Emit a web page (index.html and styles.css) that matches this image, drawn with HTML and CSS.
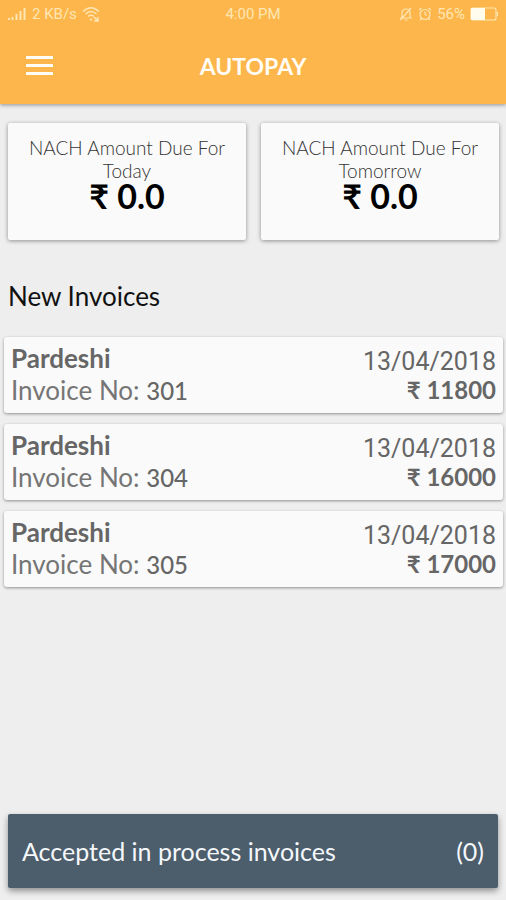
FILE: index.html
```html
<!DOCTYPE html>
<html lang="en">
<head>
<meta charset="utf-8">
<meta name="viewport" content="width=device-width, initial-scale=1">
<title>Autopay</title>
<link rel="stylesheet" href="styles.css">
</head>
<body>
<header class="app-header">
  <div class="status-bar">
    <div class="status-group">
      <svg class="icon-signal" viewBox="0 0 19 14" aria-hidden="true"><path d="M1.5 11v2M5 10v3M9 7v6M13 4v9M17 1v12"/></svg>
      <span>2 KB/s</span>
      <svg class="icon-wifi" viewBox="0 0 18 16" aria-hidden="true"><path d="M1 5.5Q9-2 17 5.5M3.5 8Q9 3 14.500 8M6 10.500Q9 8 12 10.500M8 13l1 1 1-1M12 11l4 4M16 11v4h-4"/></svg>
    </div>
    <span class="clock">4:00 PM</span>
    <div class="status-group status-right">
      <svg class="icon-status" viewBox="0 0 14 14" aria-hidden="true"><path d="M1 11h12M3 11V6q0-4 4-4t4 4v5M5.500 13h3M1.500 13L12 1"/></svg>
      <svg class="icon-status" viewBox="0 0 14 14" aria-hidden="true"><circle cx="7" cy="7.500" r="5"/><path d="M7 4.500v3l2 1M1 3l2.500-2M13 3l-2.500-2M3.500 11.500L2 13M10.500 11.500L12 13"/></svg>
      <span>56%</span>
      <svg class="icon-battery" viewBox="0 0 29 14" aria-hidden="true"><rect x="1" y="1" width="25" height="12" rx="2"/><path class="charge" d="M1 1h14v12H1z"/><path d="M27.500 5v4"/></svg>
    </div>
  </div>
  <div class="toolbar">
    <button class="menu-button" type="button" aria-label="Menu">
      <svg class="icon-menu" viewBox="0 0 28 20" aria-hidden="true"><path d="M0 1.500h27M0 9.500h27M0 17.500h27"/></svg>
    </button>
    <h1 class="title">AUTOPAY</h1>
  </div>
</header>
<main class="content">
  <section class="summary">
    <article class="due-card">
      <p class="due-label">NACH Amount Due For Today</p>
      <p class="due-amount">₹ 0.0</p>
    </article>
    <article class="due-card">
      <p class="due-label">NACH Amount Due For Tomorrow</p>
      <p class="due-amount">₹ 0.0</p>
    </article>
  </section>
  <h2 class="section-title">New Invoices</h2>
  <ul class="invoices">
    <li class="invoice">
      <div class="details"><strong class="name">Pardeshi</strong><span>Invoice No: <b class="number">301</b></span></div>
      <div class="billing"><time class="date" datetime="2018-04-13">13/04/2018</time><strong class="amount">₹ 11800</strong></div>
    </li>
    <li class="invoice">
      <div class="details"><strong class="name">Pardeshi</strong><span>Invoice No: <b class="number">304</b></span></div>
      <div class="billing"><time class="date" datetime="2018-04-13">13/04/2018</time><strong class="amount">₹ 16000</strong></div>
    </li>
    <li class="invoice">
      <div class="details"><strong class="name">Pardeshi</strong><span>Invoice No: <b class="number">305</b></span></div>
      <div class="billing"><time class="date" datetime="2018-04-13">13/04/2018</time><strong class="amount">₹ 17000</strong></div>
    </li>
  </ul>
</main>
<footer class="footer">
  <button class="accepted" type="button"><span>Accepted in process invoices</span><span>(0)</span></button>
</footer>
</body>
</html>
```

FILE: styles.css
```css
* {
  box-sizing: border-box;
}

body {
  margin: 0;
  min-height: 100vh;
  display: flex;
  flex-direction: column;
  background: #eeeeee;
  color: #666;
  font-family: Lato, "Noto Sans", sans-serif;
}

h1, h2, p, ul {
  margin: 0;
  padding: 0;
}

svg {
  display: block;
  fill: none;
  stroke: currentColor;
}

.app-header {
  background: #fdb64b;
  color: #fffdf5;
  box-shadow: 0 1px 4px rgba(0, 0, 0, 0.4);
}

.status-bar {
  display: grid;
  grid-template-columns: 1fr auto 1fr;
  align-items: center;
  height: 27px;
  padding: 0 7px;
  color: #ffe6b3;
  font: 15px/20px Roboto, sans-serif;
}

.status-group {
  display: flex;
  align-items: center;
  gap: 5px;
}

.status-right {
  justify-content: flex-end;
}

.icon-signal {
  width: 20px;
  height: 14px;
  stroke-width: 2;
}

.icon-wifi {
  width: 18px;
  height: 16px;
  stroke-width: 1.5;
}

.icon-status {
  width: 14px;
  height: 14px;
  stroke-width: 1.2;
}

.icon-battery {
  width: 29px;
  height: 14px;
  stroke-width: 1.2;
}

.charge {
  fill: #fffbed;
  stroke: none;
}

.toolbar {
  display: grid;
  grid-template-columns: 1fr auto 1fr;
  align-items: center;
  height: 77px;
  padding: 0 20px;
}

.menu-button {
  justify-self: start;
  margin: 0;
  padding: 6px;
  border: 0;
  background: none;
  color: inherit;
}

.icon-menu {
  width: 28px;
  height: 20px;
  stroke-width: 3;
}

.title {
  font-size: 23px;
  line-height: 32px;
  font-weight: 700;
}

.content {
  flex: 1;
  padding: 19px 3px 19px 4px;
}

.summary {
  display: grid;
  grid-template-columns: 1fr 1fr;
  gap: 15px;
  padding: 0 4px;
}

.due-card {
  min-height: 117px;
  padding: 13px 16px;
  background: #fafafa;
  border-radius: 2px;
  box-shadow: 0 1px 4px rgba(0, 0, 0, 0.4);
  text-align: center;
}

.due-label {
  font-size: 19px;
  line-height: 23px;
  font-weight: 300;
  color: #333;
}

.due-amount {
  color: #000;
  font-size: 34px;
  line-height: 28px;
  font-weight: 700;
}

.section-title {
  padding: 39px 4px 24px;
  color: #111;
  font-size: 26px;
  line-height: 34px;
  font-weight: 400;
}

.invoices {
  display: grid;
  gap: 11px;
  list-style: none;
}

.invoice {
  display: flex;
  justify-content: space-between;
  min-height: 76px;
  padding: 5px 7px;
  background: #fafafa;
  border-radius: 3px;
  box-shadow: 0 1px 3px rgba(0, 0, 0, 0.4);
  font-size: 26px;
  line-height: 32px;
}

.details,
.billing {
  display: flex;
  flex-direction: column;
}

.details {
  color: #757575;
}

.name,
.number {
  color: #666;
}

.name {
  font-weight: 700;
}

.billing {
  padding-top: 6px;
  text-align: right;
  line-height: 28px;
}

.number {
  font-size: 24px;
  font-weight: 500;
}

.date {
  font-size: 25px;
  font-family: Roboto, sans-serif;
}

.amount {
  font-size: 24px;
}

.footer {
  padding: 0 8px 12px;
}

.accepted {
  display: flex;
  justify-content: space-between;
  align-items: center;
  width: 100%;
  height: 74px;
  padding: 0 14px;
  border: 0;
  border-radius: 2px;
  background: #4c5d6b;
  box-shadow: 0 3px 6px rgba(0, 0, 0, 0.4);
  color: #f4f8fb;
  font: 25px/32px Lato, sans-serif;
}
```
